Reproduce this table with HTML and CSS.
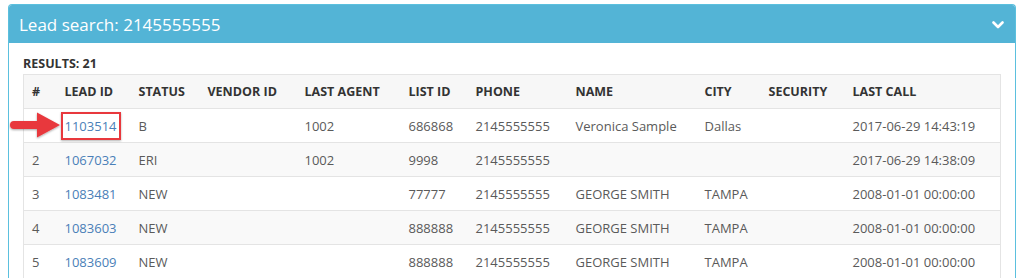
FILE: index.html
```html
<!DOCTYPE html>
<html>
<head>
<meta charset="utf-8">
<link rel="stylesheet" href="styles.css">
</head>
<body>
<div class="panel">
  <div class="panel-heading">
    <span class="panel-title">Lead search: 2145555555</span>
    <svg class="chev" width="12" height="8" viewBox="0 0 12 8"><path d="M1.5 1.5 L6 6 L10.5 1.5" fill="none" stroke="#fff" stroke-width="2.6" stroke-linecap="round" stroke-linejoin="round"/></svg>
  </div>
  <div class="panel-body">
    <div class="results">RESULTS: 21</div>
    <table class="grid">
      <colgroup>
        <col style="width:33px"><col style="width:74px"><col style="width:69px"><col style="width:97px"><col style="width:104px"><col style="width:67px"><col style="width:100px"><col style="width:129px"><col style="width:64px"><col style="width:84px"><col style="width:156px">
      </colgroup>
      <thead>
        <tr><th>#</th><th>LEAD ID</th><th>STATUS</th><th>VENDOR ID</th><th>LAST AGENT</th><th>LIST ID</th><th>PHONE</th><th>NAME</th><th>CITY</th><th>SECURITY</th><th>LAST CALL</th></tr>
      </thead>
      <tbody>
        <tr><td class="num"><span class="marker"><svg width="54" height="30" viewBox="0 0 54 30"><defs><filter id="sh" x="-20%" y="-20%" width="140%" height="160%"><feDropShadow dx="0" dy="1" stdDeviation="0.8" flood-color="#000" flood-opacity="0.35"/></filter></defs><path d="M5 10 H28 V1.5 L51 14 L28 26.5 V18 H5 A4 4 0 0 1 5 10 Z" fill="#e8383d" filter="url(#sh)"/></svg></span></td><td><a class="lead boxed">1103514</a></td><td>B</td><td></td><td>1002</td><td>686868</td><td>2145555555</td><td>Veronica Sample</td><td>Dallas</td><td></td><td>2017-06-29 14:43:19</td></tr>
        <tr><td class="num">2</td><td><a class="lead">1067032</a></td><td>ERI</td><td></td><td>1002</td><td>9998</td><td>2145555555</td><td></td><td></td><td></td><td>2017-06-29 14:38:09</td></tr>
        <tr><td class="num">3</td><td><a class="lead">1083481</a></td><td>NEW</td><td></td><td></td><td>77777</td><td>2145555555</td><td>GEORGE SMITH</td><td>TAMPA</td><td></td><td>2008-01-01 00:00:00</td></tr>
        <tr><td class="num">4</td><td><a class="lead">1083603</a></td><td>NEW</td><td></td><td></td><td>888888</td><td>2145555555</td><td>GEORGE SMITH</td><td>TAMPA</td><td></td><td>2008-01-01 00:00:00</td></tr>
        <tr><td class="num">5</td><td><a class="lead">1083609</a></td><td>NEW</td><td></td><td></td><td>888888</td><td>2145555555</td><td>GEORGE SMITH</td><td>TAMPA</td><td></td><td>2008-01-01 00:00:00</td></tr>
      </tbody>
    </table>
  </div>
</div>
</body>
</html>
```
FILE: styles.css
```css
html, body { margin: 0; padding: 0; background: #fff; }
body {
  font-family: "Open Sans", "DejaVu Sans", sans-serif;
  font-size: 13px;
  color: #555;
  padding: 4px 8px 0 8px;
  overflow: hidden;
  height: 278px;
  box-sizing: border-box;
}
.panel {
  border: 1px solid #5bc0de;
  border-bottom: none;
  border-radius: 4px 4px 0 0;
  width: 1008px;
  box-sizing: border-box;
}
.panel-heading {
  background: #53b4d6;
  color: #fff;
  height: 38px;
  display: flex;
  align-items: center;
  justify-content: space-between;
  padding: 0 11px 0 10px;
  border-radius: 3px 3px 0 0;
}
.panel-title { font-size: 17px; }
.chev { margin-top: 1px; }
.panel-body { padding: 12px 14px 0 14px; }
.results {
  font-weight: bold;
  color: #333;
  font-size: 12.5px;
  line-height: 18px;
  height: 19px;
}
.grid {
  border-collapse: collapse;
  table-layout: fixed;
  width: 978px;
  border: 1px solid #e4e4e4;
}
.grid th, .grid td {
  height: 33px;
  padding: 0 8px;
  text-align: left;
  white-space: nowrap;
  border-top: 1px solid #e4e4e4;
  vertical-align: middle;
}
.grid th {
  background: #f7f7f7;
  color: #333;
  font-size: 12.5px;
  font-weight: bold;
}
.grid td { color: #5a5a5a; }
.grid tbody tr:nth-child(even) td { background: #f9f9f9; }
.lead { color: #4a7fb8; text-decoration: none; }
.boxed {
  display: inline-block;
  border: 2px solid #e8383d;
  box-shadow: 0 1px 2px rgba(0,0,0,0.3);
  padding: 3px 2px;
  margin: -5px -4px;
  line-height: 18px;
}
.num { position: relative; }
.marker {
  position: absolute;
  left: -15px;
  top: 2px;
  line-height: 0;
}
```
